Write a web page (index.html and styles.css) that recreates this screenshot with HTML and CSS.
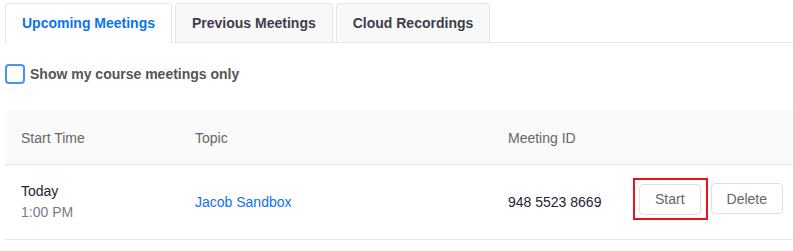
FILE: index.html
```html
<!DOCTYPE html>
<html lang="en">
<head>
    <meta charset="UTF-8">
    <meta name="viewport" content="width=device-width, initial-scale=1.0">
    <title>Meetings</title>
    <link rel="stylesheet" href="styles.css">
</head>
<body>
    <div class="page">
        <ul class="tabs">
            <li class="tab active">Upcoming Meetings</li>
            <li class="tab">Previous Meetings</li>
            <li class="tab">Cloud Recordings</li>
        </ul>

        <label class="filter">
            <span class="checkbox"></span>
            Show my course meetings only
        </label>

        <div class="meetings">
            <div class="row head">
                <div class="cell">Start Time</div>
                <div class="cell">Topic</div>
                <div class="cell">Meeting ID</div>
                <div class="cell actions"></div>
            </div>
            <div class="row">
                <div class="cell when">
                    <span class="day">Today</span>
                    <span class="time">1:00 PM</span>
                </div>
                <div class="cell"><a class="topic" href="#">Jacob Sandbox</a></div>
                <div class="cell meeting-id">948 5523 8669</div>
                <div class="cell actions">
                    <span class="highlight"><button class="btn">Start</button></span>
                    <button class="btn">Delete</button>
                </div>
            </div>
        </div>
    </div>
</body>
</html>
```

FILE: styles.css
```css
body {
    font-family: 'Liberation Sans', Arial, sans-serif;
    font-size: 14px;
    background-color: #fff;
    margin: 0;
    padding: 0;
}
.page {
    padding: 3px 0 0 5px;
}
.tabs {
    display: flex;
    gap: 3px;
    list-style: none;
    margin: 0;
    padding: 0;
    border-bottom: 1px solid #e6e6e6;
}
.tab {
    height: 38px;
    line-height: 38px;
    padding: 0 16px;
    border: 1px solid #e6e6e6;
    border-bottom: none;
    border-radius: 4px 4px 0 0;
    background-color: #f8f8f8;
    color: #3d3d4a;
    font-weight: bold;
}
.tab.active {
    height: 39px;
    margin-bottom: -1px;
    background-color: #fff;
    color: #0e72ed;
}
.filter {
    display: flex;
    align-items: center;
    gap: 5px;
    margin-top: 21px;
    color: #555;
    font-weight: bold;
}
.checkbox {
    box-sizing: border-box;
    width: 20px;
    height: 20px;
    border: 2px solid #4a93f5;
    border-radius: 4px;
    background-color: #fff;
}
.meetings {
    margin-top: 27px;
}
.row {
    display: grid;
    grid-template-columns: 174px 313px 141px 1fr;
    align-items: center;
    height: 74px;
    border-bottom: 1px solid #e6e6e6;
    color: #232333;
}
.row.head {
    height: 53px;
    background-color: #fafafa;
    color: #666;
}
.cell {
    padding-left: 16px;
}
.cell.actions {
    display: flex;
    align-items: center;
    gap: 3px;
    padding-left: 0;
    margin-bottom: 7px;
}
.when {
    display: flex;
    flex-direction: column;
    line-height: 21px;
}
.time {
    color: #7a7a87;
}
.topic {
    color: #0e72ed;
    text-decoration: none;
}
.highlight {
    display: inline-flex;
    padding: 4px 5px 3px 4px;
    border: 2px solid #e3161f;
}
.btn {
    box-sizing: border-box;
    height: 31px;
    padding: 0 15px;
    border: 1px solid #dcdfe4;
    border-radius: 4px;
    background-color: #fff;
    color: #666;
    font-family: inherit;
    font-size: 14px;
}
```
